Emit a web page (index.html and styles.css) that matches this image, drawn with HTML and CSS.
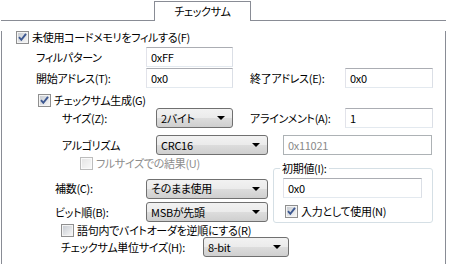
FILE: index.html
```html
<!DOCTYPE html>
<html lang="ja">
<head>
  <meta charset="UTF-8">
  <title>チェックサム</title>
  <link rel="stylesheet" href="styles.css">
</head>
<body>
  <div class="window">
    <div class="tabs">
      <div class="tab-fill lead"></div>
      <div class="tab">チェックサム</div>
      <div class="tab-fill rest"></div>
    </div>

    <div class="panel">
      <!-- フィル -->
      <div class="row cb-row r-fill">
        <span class="cb on"><svg viewBox="0 0 11 11"><path d="M2 5.2 L4.3 7.8 L9 1.8"/></svg></span>未使用コードメモリをフィルする(F)
      </div>
      <div class="row ctl-row r-pattern">
        <span class="lbl w110">フィルパターン</span>
        <span class="edit w87">0xFF</span>
      </div>
      <div class="row ctl-row r-addr">
        <span class="lbl w110">開始アドレス(T):</span>
        <span class="edit w87">0x0</span>
        <span class="lbl right">終了アドレス(E):</span>
        <span class="edit w88">0x0</span>
      </div>

      <!-- チェックサム -->
      <div class="row cb-row r-sum">
        <span class="cb on"><svg viewBox="0 0 11 11"><path d="M2 5.2 L4.3 7.8 L9 1.8"/></svg></span>チェックサム生成(G)
      </div>
      <div class="row ctl-row r-size">
        <span class="lbl w94">サイズ(Z):</span>
        <span class="combo w77">2バイト</span>
        <span class="lbl right">アラインメント(A):</span>
        <span class="edit w88">1</span>
      </div>
      <div class="row ctl-row r-algo">
        <span class="lbl w94">アルゴリズム</span>
        <span class="combo w112">CRC16</span>
        <span class="edit disabled poly">0x11021</span>
      </div>

      <div class="lower">
        <div class="row cb-row r-full">
          <span class="cb off"></span><span class="dim">フルサイズでの結果(U)</span>
        </div>
        <div class="row ctl-row r-comp">
          <span class="lbl w91">補数(C):</span>
          <span class="combo w122">そのまま使用</span>
        </div>
        <div class="row ctl-row r-bits">
          <span class="lbl w91">ビット順(B):</span>
          <span class="combo w122">MSBが先頭</span>
        </div>

        <fieldset class="group">
          <legend>初期値(I):</legend>
          <span class="edit w139">0x0</span>
          <div class="row cb-row r-use">
            <span class="cb on"><svg viewBox="0 0 11 11"><path d="M2 5.2 L4.3 7.8 L9 1.8"/></svg></span>入力として使用(N)
          </div>
        </fieldset>
      </div>

      <div class="row cb-row r-swap">
        <span class="cb"></span>語句内でバイトオーダを逆順にする(R)
      </div>
      <div class="row ctl-row r-unit">
        <span class="lbl w142">チェックサム単位サイズ(H):</span>
        <span class="combo w86">8-bit</span>
      </div>
    </div>
  </div>
  <div class="footer"></div>
</body>
</html>
```

FILE: styles.css
```css
body {
  margin: 0;
  background: #fff;
  font-family: "Noto Sans CJK JP", "Liberation Sans", sans-serif;
  font-size: 11px;
  font-feature-settings: "palt" 1;
  letter-spacing: -0.3px;
  line-height: 13px;
  color: #000;
}

.window {
  width: 445px;
  margin-left: 1px;
}

/* tab strip */
.tabs {
  display: flex;
  height: 21px;
}
.tab-fill {
  border-bottom: 1px solid #898c95;
}
.tab-fill.lead {
  width: 153px;
}
.tab-fill.rest {
  flex: 1;
}
.tab {
  width: 97px;
  margin-top: 1px;
  box-sizing: border-box;
  border: 1px solid #898c95;
  border-bottom: none;
  background: #fff;
  text-align: center;
  line-height: 19px;
}

.panel {
  height: 238px;
  box-sizing: border-box;
  border: 1px solid #898c95;
  border-top: none;
}

.footer {
  height: 6px;
  background: #f0f0f0;
}

/* rows */
.row {
  display: flex;
  align-items: center;
}
.cb-row {
  height: 13px;
}
.ctl-row {
  height: 20px;
}

.r-fill { margin-top: 10px; padding-left: 14px; }
.r-pattern { margin-top: 3px; padding-left: 34px; }
.r-addr { margin-top: 1px; padding-left: 34px; }
.r-sum { margin-top: 6px; padding-left: 36px; }
.r-size { margin-top: 1px; padding-left: 60px; }
.r-algo { margin-top: 7px; padding-left: 60px; }
.r-full { padding-left: 78px; }
.r-comp { margin-top: 8px; padding-left: 53px; }
.r-bits { margin-top: 3px; padding-left: 53px; }
.r-use { margin-top: 7px; padding-left: 2px; }
.r-swap { margin-top: 1px; padding-left: 59px; }
.r-unit { margin-top: 0; padding-left: 59px; }

.lower {
  display: grid;
  grid-template-columns: 271px 160px;
  grid-template-rows: auto auto auto;
  margin-top: 2px;
}
.lower > .row {
  grid-column: 1;
}

/* labels */
.lbl {
  white-space: nowrap;
  flex: none;
}
.lbl.right {
  width: 95px;
  margin-left: 17px;
}
.w110 { width: 110px; }
.w94 { width: 94px; }
.w91 { width: 91px; }
.w142 { width: 142px; }

/* text boxes */
.edit {
  box-sizing: border-box;
  height: 20px;
  border: 1px solid;
  border-color: #abadb3 #dbdfe6 #e3e9ef #e2e3ea;
  background: #fff;
  padding-left: 4px;
  line-height: 18px;
  white-space: nowrap;
  flex: none;
}
.edit.disabled {
  border-color: #adb2b5;
  color: #8a8a8a;
}
.poly {
  width: 149px;
  margin-left: 15px;
}
.w87 { width: 87px; }
.w88 { width: 88px; }
.w139 { width: 139px; display: block; margin-top: 3px; }

/* drop-down lists */
.combo {
  box-sizing: border-box;
  height: 20px;
  display: flex;
  align-items: center;
  justify-content: space-between;
  padding-left: 4px;
  border: 1px solid #707070;
  border-radius: 3px;
  background: linear-gradient(#f2f2f2, #ebebeb 50%, #dddddd 50%, #cfcfcf);
  white-space: nowrap;
  flex: none;
}
.combo::after {
  content: "";
  margin-right: 7px;
  border-left: 4px solid transparent;
  border-right: 4px solid transparent;
  border-top: 4px solid #000;
}
.w77 { width: 77px; }
.w112 { width: 112px; }
.w122 { width: 122px; }
.w86 { width: 86px; }

/* check boxes */
.cb {
  box-sizing: border-box;
  width: 13px;
  height: 13px;
  margin-right: 3px;
  padding: 1px;
  border: 1px solid #8f8f8f;
  background: linear-gradient(135deg, #c9cdd3, #f5f5f5) content-box, #f4f4f4;
  flex: none;
}
.cb svg {
  display: block;
  width: 11px;
  height: 11px;
  margin: -1px;
}
.cb path {
  fill: none;
  stroke: #3d5891;
  stroke-width: 1.9;
}
.cb.off {
  border-color: #bcbcbc;
  background: linear-gradient(135deg, #e6e6e6, #f8f8f8) content-box, #fafafa;
}
.dim {
  color: #8d8d8d;
}

/* group box */
.group {
  grid-column: 2;
  grid-row: 1 / span 3;
  box-sizing: border-box;
  width: 160px;
  height: 61px;
  margin: 5px 0 0 0;
  padding: 0 0 0 9px;
  border: 1px solid #d5dfe5;
  border-radius: 3px;
  min-width: 0;
}
.group legend {
  margin-left: -3px;
  padding: 0 2px;
  line-height: 13px;
}
```
